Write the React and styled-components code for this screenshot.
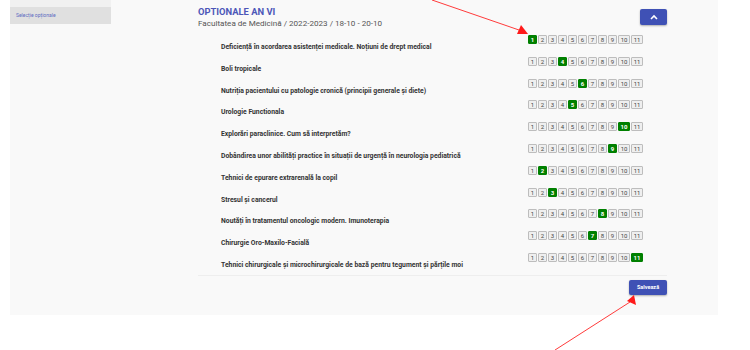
import React from 'react';
import styled, { createGlobalStyle } from 'styled-components';

const GlobalStyle = createGlobalStyle`
  body {
    margin: 0;
    background: #fff;
    font-family: Roboto, "Noto Sans", Arial, sans-serif;
  }
`;

const courses = [
  ['Deficiență în acordarea asistenței medicale. Noțiuni de drept medical', 1],
  ['Boli tropicale', 4],
  ['Nutriția pacientului cu patologie cronică (principii generale și diete)', 6],
  ['Urologie Functionala', 5],
  ['Explorări paraclinice. Cum să interpretăm?', 10],
  ['Dobândirea unor abilități practice în situații de urgență în neurologia pediatrică', 9],
  ['Tehnici de epurare extrarenală la copil', 2],
  ['Stresul și cancerul', 3],
  ['Noutăți în tratamentul oncologic modern. Imunoterapia', 8],
  ['Chirurgie Oro-Maxilo-Facială', 7],
  ['Tehnici chirurgicale și microchirurgicale de bază pentru tegument și părțile moi', 11],
];

const App = () => {
  return (
    <Page>
      <GlobalStyle />
      <Panel>
        <Sidebar>
          <SideItem />
          <SideItem active>Selecție opționale</SideItem>
        </Sidebar>
        <Main>
          <Header>
            <div>
              <Title>OPTIONALE AN VI</Title>
              <Subtitle>Facultatea de Medicină / 2022-2023 / 18-10 - 20-10</Subtitle>
            </div>
            <UpButton>
              <svg width="8" height="6" viewBox="0 0 8 6">
                <path d="M1 5 L4 2 L7 5" fill="none" stroke="#fff" strokeWidth="1.6" />
              </svg>
            </UpButton>
          </Header>
          <List>
            {courses.map(([name, pick]) => (
              <Row key={name}>
                <Label>{name}</Label>
                <Ratings>
                  {Array.from({ length: 11 }, (_, i) => (
                    <Box key={i} wide={i >= 9} selected={i + 1 === pick}>
                      {i + 1}
                    </Box>
                  ))}
                </Ratings>
              </Row>
            ))}
          </List>
          <Footer>
            <SaveButton>Salvează</SaveButton>
          </Footer>
        </Main>
      </Panel>
      <Arrows width="750" height="350" viewBox="0 0 750 350">
        <line x1="432" y1="0" x2="519" y2="30" stroke="#ff3b3b" strokeWidth="1" />
        <polygon points="528,34 517,34 521,25" fill="#ff1a1a" />
        <line x1="555" y1="350" x2="630" y2="302" stroke="#ff3b3b" strokeWidth="1" />
        <polygon points="634,295 636,305 627,301" fill="#ff1a1a" />
      </Arrows>
    </Page>
  );
};

export default App;

const Page = styled.div`
  position: relative;
  width: 750px;
  height: 350px;
  padding-left: 10px;
  box-sizing: border-box;
`;

const Panel = styled.div`
  display: flex;
  width: 708px;
  height: 315px;
  background: #f9f9f9;
`;

const Sidebar = styled.div`
  width: 101px;
  display: flex;
  flex-direction: column;
`;

const SideItem = styled.div`
  height: ${(p) => (p.active ? '17px' : '7px')};
  background: ${(p) => (p.active ? '#e0e0e0' : '#f1f1f1')};
  color: #5c6bc0;
  font-size: 5px;
  line-height: 17px;
  padding-left: 6px;
`;

const Main = styled.div`
  flex: 1;
  padding: 6px 51px 0 87px;
`;

const Header = styled.div`
  display: flex;
  justify-content: space-between;
  align-items: flex-start;
`;

const Title = styled.div`
  color: #4c56b8;
  font-weight: 700;
  font-size: 9.4px;
  line-height: 11px;
`;

const Subtitle = styled.div`
  color: #555;
  font-size: 8.1px;
  line-height: 12px;
`;

const UpButton = styled.div`
  width: 27px;
  height: 16px;
  margin-top: 3px;
  border-radius: 2px;
  background: #3f51b5;
  box-shadow: 0 1px 2px rgba(0, 0, 0, 0.3);
  display: flex;
  align-items: center;
  justify-content: center;
`;

const List = styled.div`
  margin-top: 6px;
  padding: 0 24px 0 23px;
  display: flex;
  flex-direction: column;
  border-bottom: 1px solid #eeeeee;
`;

const Row = styled.div`
  height: 21.8px;
  display: flex;
  justify-content: space-between;
  align-items: flex-start;
`;

const Label = styled.div`
  padding-top: 8px;
  font-size: 6.8px;
  line-height: 8px;
  font-weight: 700;
  color: #333;
`;

const Ratings = styled.div`
  display: flex;
  gap: 1px;
`;

const Box = styled.div`
  width: ${(p) => (p.wide ? '12px' : '9px')};
  height: 9px;
  box-sizing: border-box;
  border: 1px solid ${(p) => (p.selected ? '#008000' : '#bdbdbd')};
  border-radius: 1px;
  background: ${(p) => (p.selected ? '#008000' : '#efefef')};
  color: ${(p) => (p.selected ? '#fff' : '#444')};
  font-weight: ${(p) => (p.selected ? 700 : 400)};
  font-size: 6px;
  line-height: 7px;
  text-align: center;
`;

const Footer = styled.div`
  display: flex;
  justify-content: flex-end;
  padding-top: 4px;
`;

const SaveButton = styled.div`
  width: 38px;
  height: 15px;
  border-radius: 2px;
  background: #3f51b5;
  box-shadow: 0 1px 2px rgba(0, 0, 0, 0.3);
  color: #fff;
  font-size: 5.5px;
  font-weight: 700;
  display: flex;
  align-items: center;
  justify-content: center;
`;

const Arrows = styled.svg`
  position: absolute;
  left: 0;
  top: 0;
  pointer-events: none;
`;
